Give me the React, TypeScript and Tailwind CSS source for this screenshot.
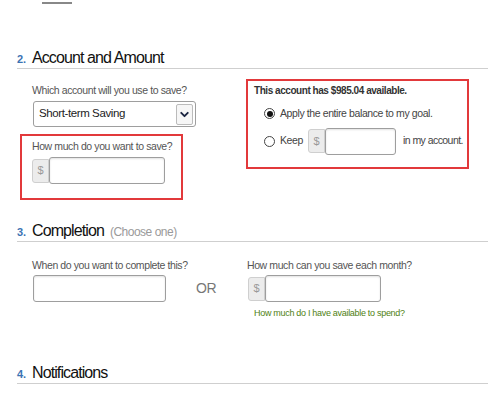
import { ChevronDown } from "lucide-react";

function Heading({ num, title, note }: { num: string; title: string; note?: string }) {
  return (
    <div className="flex items-baseline h-[21px] border-b border-[#cfcfcf] whitespace-nowrap">
      <span className="w-[15px] text-[11px] font-bold text-[#3b73b3]">{num}</span>
      <span className="text-[16px] leading-[20px] tracking-[-0.9px] text-[#111]">{title}</span>
      {note && <span className="ml-[6px] text-[12px] tracking-[-0.5px] text-[#9a9a9a]">{note}</span>}
    </div>
  );
}

function MoneyInput({ width }: { width: string }) {
  return (
    <div className="flex items-center">
      <div className="h-[24px] w-[17px] flex items-center justify-center bg-[#ececec] border border-[#cfcfcf] rounded-l-[3px] text-[11px] text-[#999]">
        $
      </div>
      <div className={`h-[27px] ${width} border border-[#9e9e9e] rounded-[3px] bg-white shadow-[inset_0_1px_2px_rgba(0,0,0,0.12)]`} />
    </div>
  );
}

function Radio({ checked }: { checked?: boolean }) {
  return (
    <span className="w-[11px] h-[11px] rounded-full border border-[#444] bg-white flex items-center justify-center">
      {checked && <span className="w-[6px] h-[6px] rounded-full bg-[#111]" />}
    </span>
  );
}

const label = "text-[10.5px] leading-[12px] tracking-[-0.4px] text-[#555] whitespace-nowrap";

export default function App() {
  return (
    <div
      className="w-[500px] h-[400px] bg-white overflow-hidden pl-[17px] pr-[12px]"
      style={{ fontFamily: '"Liberation Sans", Arial, sans-serif' }}
    >
      {/* cut-off thumbnail at top */}
      <div className="ml-[16px] w-[47px] h-[5px] flex items-start justify-center pt-[2px]">
        <div className="w-[30px] h-[2px] bg-[#888]" />
      </div>

      {/* Section 2 */}
      <div className="mt-[43px]">
        <Heading num="2." title="Account and Amount" />
      </div>
      <div className="flex items-start">
        <div className="w-[229px] pt-[15px]">
          <div className={`ml-[15px] ${label}`}>Which account will you use to save?</div>
          <div className="ml-[16px] mt-[5px] w-[163px] h-[26px] border border-[#9e9e9e] rounded-[3px] flex items-center justify-between pl-[5px] pr-[2px]">
            <span className="text-[11.5px] tracking-[-0.4px] text-[#222]">Short-term Saving</span>
            <span className="w-[17px] h-[21px] border border-[#bbb] rounded-[2px] bg-[#f6f6f6] flex items-center justify-center">
              <ChevronDown size={13} strokeWidth={3.5} className="text-[#1a2440]" />
            </span>
          </div>
          <div className="ml-[3px] mt-[7px] w-[163px] h-[66px] border-2 border-[#e2393b] pl-[10px] pt-[4px]">
            <div className={label}>How much do you want to save?</div>
            <div className="mt-[5px]">
              <MoneyInput width="w-[116px]" />
            </div>
          </div>
        </div>

        <div className="mt-[10px] w-[223px] h-[90px] border-2 border-[#e2393b] pl-[6px] pt-[4px] whitespace-nowrap">
          <div className="text-[10px] leading-[12px] font-bold tracking-[-0.45px] text-[#333]">
            This account has $985.04 available.
          </div>
          <div className="ml-[10px] mt-[9px] flex items-center gap-[5px] text-[10.5px] tracking-[-0.4px] text-[#444]">
            <Radio checked />
            <span>Apply the entire balance to my goal.</span>
          </div>
          <div className="ml-[10px] mt-[6px] flex items-center text-[10.5px] tracking-[-0.4px] text-[#444]">
            <Radio />
            <span className="ml-[5px] mr-[5px]">Keep</span>
            <MoneyInput width="w-[71px]" />
            <span className="ml-[7px] tracking-[-0.55px]">in my account.</span>
          </div>
        </div>
      </div>

      {/* Section 3 */}
      <div className="mt-[21px]">
        <Heading num="3." title="Completion" note="(Choose one)" />
      </div>
      <div className="flex items-start pt-[17px]">
        <div className="ml-[15px] w-[164px]">
          <div className={label}>When do you want to complete this?</div>
          <div className="ml-[1px] mt-[4px] w-[133px] h-[27px] border border-[#9e9e9e] rounded-[3px] shadow-[inset_0_1px_2px_rgba(0,0,0,0.12)]" />
        </div>
        <div className="w-[51px] pt-[21px] text-[14px] leading-[16px] tracking-[-0.3px] text-[#777]">OR</div>
        <div>
          <div className={label}>How much can you save each month?</div>
          <div className="ml-[1px] mt-[4px]">
            <MoneyInput width="w-[116px]" />
          </div>
          <div className="ml-[7px] mt-[5px] text-[9px] tracking-[-0.3px] text-[#4f7f13] whitespace-nowrap">
            How much do I have available to spend?
          </div>
        </div>
      </div>

      {/* Section 4 */}
      <div className="mt-[42px]">
        <Heading num="4." title="Notifications" />
      </div>
    </div>
  );
}
